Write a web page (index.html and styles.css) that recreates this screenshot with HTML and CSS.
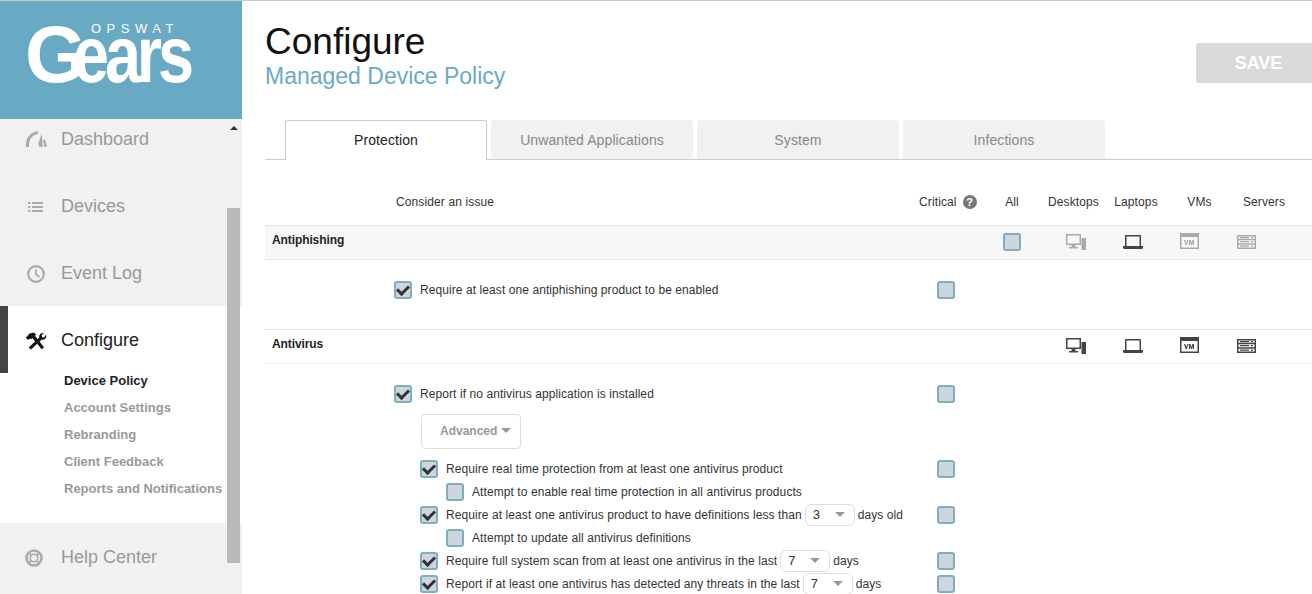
FILE: index.html
```html
<!DOCTYPE html>
<html lang="en">
<head>
<meta charset="utf-8">
<title>Configure - Managed Device Policy</title>
<link rel="stylesheet" href="styles.css">
</head>
<body>
<svg class="defs" width="0" height="0" aria-hidden="true">
  <symbol id="i-desktop" viewBox="0 0 20 16">
    <path fill="currentColor" d="M0 0h15v11H9.500v2H12v1.500H3V13h2.500v-2H0zM1.500 1.500v8h12v-8z"/>
    <path fill="currentColor" d="M15.500 4H20v12h-4.500z"/>
  </symbol>
  <symbol id="i-laptop" viewBox="0 0 20 14">
    <path fill="currentColor" d="M3 0h14a1 1 0 0 1 1 1v10h2v1.500a1.500 1.500 0 0 1-1.500 1.500h-17A1.500 1.500 0 0 1 0 12.500V11h2V1a1 1 0 0 1 1-1zM3.500 1.500V11h13V1.500z"/>
  </symbol>
  <symbol id="i-vm" viewBox="0 0 19 16">
    <path fill="currentColor" fill-rule="evenodd" d="M0 0h19v16H0zM1.500 4v10.500h16V4z"/>
    <path fill="currentColor" d="M4 7h1.300l1 3.200 1-3.200h1.200L6.900 12H5.600zM9 7h1.500l1 3 1-3H14v5h-1.200V9l-1 3h-.8l-1-3v3H9z"/>
  </symbol>
  <symbol id="i-server" viewBox="0 0 19 14">
    <path fill="currentColor" fill-rule="evenodd" d="M0 0h19v14H0zM1.500 1.500v2.200h16V1.500zM1.500 5.200v3.100h16V5.200zM1.500 9.800v2.700h16V9.800z"/>
    <path fill="currentColor" d="M3 2h9v1.200H3zM3 6h9v1.200H3zM3 10.500h9v1.200H3zM14 2h2v1.200h-2zM14 6h2v1.200h-2zM14 10.500h2v1.200h-2z"/>
  </symbol>
</svg>

<div class="page">
  <aside class="sidebar">
    <div class="brand">
      <div class="logo">
        <span class="logo-word"><span>G</span><span class="logo-rest">ears</span></span>
        <span class="logo-top">OPSWAT</span>
      </div>
    </div>
    <nav class="nav">
      <a class="nav-item first">
        <svg class="nav-icon" viewBox="0 0 22 18" width="22" height="18"><path fill="none" stroke="currentColor" stroke-width="3" d="M2.500 17C1.800 9 6 3.500 13 2.500"/><path fill="none" stroke="currentColor" stroke-width="2.400" d="M20.500 17c0-2.500-.5-5-1.700-7"/><path fill="currentColor" d="M16.800 3.500l.9 13.500h-3.400l-1-3.500z"/></svg>
        <span>Dashboard</span>
      </a>
      <a class="nav-item">
        <svg class="nav-icon" viewBox="0 0 22 18" width="22" height="18"><path fill="currentColor" d="M3 4h2.400v2H3zM7 4h11v2H7zM3 8h2.400v2H3zM7 8h11v2H7zM3 12h2.400v2H3zM7 12h11v2H7z"/></svg>
        <span>Devices</span>
      </a>
      <a class="nav-item">
        <svg class="nav-icon" viewBox="0 0 22 18" width="22" height="18"><circle cx="11" cy="9" r="7.800" fill="none" stroke="currentColor" stroke-width="2.200"/><path fill="none" stroke="currentColor" stroke-width="1.800" d="M11 4.500V9.500l3.500 2.500"/></svg>
        <span>Event Log</span>
      </a>
      <div class="nav-group">
        <a class="nav-item active">
          <svg class="nav-icon" viewBox="0 0 22 18" width="22" height="18"><path fill="currentColor" d="M4.500 1.500L9 0.500 11 2.500l-1 1.200 9 11.500-2.300 2-9.300-11.200-1 1-1.800-.2-1.500 1.300L.8 5.500 2.500 4z"/><path fill="currentColor" d="M21 2.500c.6 1.800.2 3.500-1 4.500-1 .8-2.200 1-3.300.6L6 17.500 3.700 15.400l10.600-10c-.3-1.300.1-2.600 1.100-3.500 1-.9 2.300-1.200 3.500-.9L16.700 3.300l.6 1.900 1.900.4z"/></svg>
          <span>Configure</span>
        </a>
        <ul class="subnav">
          <li class="current">Device Policy</li>
          <li>Account Settings</li>
          <li>Rebranding</li>
          <li>Client Feedback</li>
          <li>Reports and Notifications</li>
        </ul>
      </div>
      <a class="nav-item help">
        <svg class="nav-icon" viewBox="0 0 22 18" width="22" height="18"><circle cx="9" cy="9" r="7.500" fill="none" stroke="currentColor" stroke-width="2.600"/><circle cx="9" cy="9" r="3.800" fill="none" stroke="currentColor" stroke-width="1.600"/><path stroke="currentColor" stroke-width="1.600" d="M3.500 3.500l3 3M14.500 3.500l-3 3M3.500 14.500l3-3M14.500 14.500l-3-3"/></svg>
        <span>Help Center</span>
      </a>
    </nav>
    <span class="scroll-arrow"></span>
    <span class="scroll-thumb"></span>
  </aside>

  <main class="main">
    <header class="top">
      <div>
        <h1>Configure</h1>
        <h2>Managed Device Policy</h2>
      </div>
      <button class="save" type="button">SAVE</button>
    </header>

    <div class="tabs">
      <a class="tab selected">Protection</a>
      <a class="tab">Unwanted Applications</a>
      <a class="tab">System</a>
      <a class="tab">Infections</a>
    </div>

    <div class="col-labels">
      <span class="left">Consider an issue</span>
      <span class="critical-label">Critical <i class="help-dot">?</i></span>
      <span>All</span>
      <span>Desktops</span>
      <span>Laptops</span>
      <span>VMs</span>
      <span>Servers</span>
    </div>

    <section class="group">
      <div class="group-head shaded">
        <strong class="group-title">Antiphishing</strong>
        <span class="box all"></span>
        <span class="dev dim"><svg width="20" height="16"><use href="#i-desktop"/></svg></span>
        <span class="dev"><svg width="20" height="14"><use href="#i-laptop"/></svg></span>
        <span class="dev dim vm"><svg width="19" height="16"><use href="#i-vm"/></svg></span>
        <span class="dev dim"><svg width="19" height="14"><use href="#i-server"/></svg></span>
      </div>
      <div class="rows rows-short">
        <div class="row"><div class="opt"><span class="box on"></span><span>Require at least one antiphishing product to be enabled</span></div><span class="box"></span></div>
      </div>
    </section>

    <section class="group">
      <div class="group-head">
        <strong class="group-title">Antivirus</strong>
        <span class="all"></span>
        <span class="dev"><svg width="20" height="16"><use href="#i-desktop"/></svg></span>
        <span class="dev"><svg width="20" height="14"><use href="#i-laptop"/></svg></span>
        <span class="dev vm"><svg width="19" height="16"><use href="#i-vm"/></svg></span>
        <span class="dev"><svg width="19" height="14"><use href="#i-server"/></svg></span>
      </div>
      <div class="rows">
        <div class="row"><div class="opt"><span class="box on"></span><span>Report if no antivirus application is installed</span></div><span class="box"></span></div>
        <button class="advanced" type="button">Advanced<i class="caret"></i></button>
        <div class="row"><div class="opt l1"><span class="box on"></span><span>Require real time protection from at least one antivirus product</span></div><span class="box"></span></div>
        <div class="row"><div class="opt l2"><span class="box"></span><span>Attempt to enable real time protection in all antivirus products</span></div></div>
        <div class="row"><div class="opt l1"><span class="box on"></span><span>Require at least one antivirus product to have definitions less than</span><span class="select">3<i class="caret"></i></span><span>days old</span></div><span class="box"></span></div>
        <div class="row"><div class="opt l2"><span class="box"></span><span>Attempt to update all antivirus definitions</span></div></div>
        <div class="row"><div class="opt l1"><span class="box on"></span><span>Require full system scan from at least one antivirus in the last</span><span class="select">7<i class="caret"></i></span><span>days</span></div><span class="box"></span></div>
        <div class="row"><div class="opt l1"><span class="box on"></span><span>Report if at least one antivirus has detected any threats in the last</span><span class="select">7<i class="caret"></i></span><span>days</span></div><span class="box"></span></div>
      </div>
    </section>
  </main>
</div>
</body>
</html>
```

FILE: styles.css
```css
* { box-sizing: border-box; }
html, body { margin: 0; height: 594px; overflow: hidden; background: #fff; }
body { font-family: "Liberation Sans", Arial, sans-serif; color: #333; }
.defs { display: block; height: 0; }
.page { display: flex; height: 594px; border-top: 1px solid #c8c8c8; overflow: hidden; }

/* Sidebar */
.sidebar { position: relative; width: 242px; flex: none; background: #f1f1f1; display: flex; flex-direction: column; }
.brand { height: 118px; flex: none; background: #68aac4; }
.logo { position: relative; height: 100%; }
.logo-word { position: absolute; left: 25px; top: 9px; display: flex; font-weight: 700; font-size: 79px; line-height: 90px; color: #fff; }
.logo-rest { display: inline-block; margin-left: -13px; letter-spacing: -5px; transform: scaleX(.82); transform-origin: left center; }
.logo-top { position: absolute; left: 91px; top: 21px; font-size: 13px; line-height: 14px; letter-spacing: 5.500px; color: #fff; }
.nav { display: flex; flex-direction: column; }
.nav-item { display: flex; align-items: center; height: 67px; padding: 2px 0 0 25px; gap: 14px; font-size: 18px; color: #999; }
.nav-item.first { height: 53px; padding: 0 0 13px 25px; }
.nav-icon { flex: none; color: #aaa; }
.nav-group { height: 217px; background: #fff; }
.nav-item.active { color: #222; box-shadow: inset 8px 0 0 #444; }
.nav-item.active .nav-icon { color: #111; }
.subnav { list-style: none; margin: -6px 0 0; padding: 0 0 0 64px; font-size: 13px; font-weight: 700; color: #999; }
.subnav li { height: 27px; line-height: 27px; white-space: nowrap; }
.subnav .current { color: #222; }
.scroll-arrow { position: absolute; left: 230px; top: 125px; border: 4px solid transparent; border-top: 0; border-bottom: 4px solid #333; }
.scroll-thumb { position: absolute; left: 227px; top: 207px; width: 13px; height: 355px; background: #b9b9b9; }

/* Main */
.main { flex: 1; min-width: 0; padding-left: 23px; }
.top { display: flex; justify-content: space-between; height: 118px; }
h1 { margin: 20px 0 0; font-size: 37px; line-height: 42px; font-weight: 400; color: #111; }
h2 { margin: -1px 0 0; font-size: 23px; line-height: 28px; font-weight: 400; color: #68aac4; }
.save { width: 116px; height: 40px; margin-top: 42px; padding: 0 0 0 9px; border: 0; border-radius: 3px 0 0 3px; background: #d9d9d9; color: #fff; font: 700 18px "Liberation Sans", sans-serif; }
.tabs { display: flex; gap: 4px; height: 40px; padding-left: 20px; margin-top: 1px; border-bottom: 1px solid #ccc; }
.tab { width: 202px; height: 39px; display: flex; align-items: center; justify-content: center; background: #f1f1f1; color: #888; font-size: 14px; letter-spacing: .1px; border-radius: 3px 3px 0 0; }
.tab.selected { height: 40px; padding-bottom: 2px; background: #fff; color: #222; border: 1px solid #ccc; border-bottom: 0; }

.col-labels { display: grid; grid-template-columns: 523px 61px 64px 59px 66px 61px 68px; padding-left: 131px; height: 65px; align-items: center; padding-top: 18px; font-size: 12px; letter-spacing: .12px; color: #333; justify-items: center; }
.col-labels .left, .critical-label { justify-self: start; }
.critical-label { display: flex; align-items: center; gap: 6px; white-space: nowrap; }
.help-dot { display: inline-flex; align-items: center; justify-content: center; width: 14px; height: 14px; border-radius: 50%; background: #777; color: #fff; font: 700 11px "Liberation Sans", sans-serif; }

.group-head { display: flex; align-items: center; height: 35px; padding-bottom: 2px; border-top: 1px solid #e6e6e6; border-bottom: 1px dotted #ddd; }
.group-head.shaded { background: #f7f7f7; }
.group-title { width: 738px; padding: 0 0 3px 7px; font-size: 12px; letter-spacing: -.1px; color: #222; }
.all { width: 18px; margin-right: 26px; flex: none; }
.dev { width: 57px; flex: none; display: flex; justify-content: center; color: #444; }
.dev.dim { color: #aaa; }
.vm svg { margin-top: -2px; }
.rows { padding-top: 18px; }
.rows-short { padding-bottom: 28px; }
.row { display: flex; align-items: center; height: 23px; }
.opt { width: 672px; flex: none; display: flex; align-items: center; padding-left: 129px; font-size: 12px; letter-spacing: .08px; color: #333; white-space: nowrap; }
.opt.l1 { padding-left: 155px; }
.opt.l2 { padding-left: 181px; }
.opt > .box { margin-right: 8px; }
.box { width: 18px; height: 18px; flex: none; display: inline-flex; align-items: center; justify-content: center; border: 2px solid #7dafbf; border-radius: 3px; background: #ccd6dc; }
.box.on::after { content: ""; width: 9px; height: 5px; margin-top: -2px; border-left: 3px solid #333; border-bottom: 3px solid #333; transform: rotate(-45deg); }
.advanced { display: flex; align-items: center; width: 100px; height: 35px; margin: 9px 0 8px 156px; padding: 0 0 2px 18px; border: 1px solid #ddd; border-radius: 4px; background: #fff; color: #999; font: 700 12px "Liberation Sans", sans-serif; }
.caret { display: inline-block; margin-left: 4px; border: 5px solid transparent; border-top: 5px solid #999; border-bottom: 0; }
.select { display: inline-flex; align-items: center; justify-content: space-between; width: 50px; height: 22px; margin: 0 3px; padding: 0 9px 0 7px; border: 1px solid #ddd; border-radius: 6px; font-size: 13px; }
.select .caret { margin: 0; }
```
